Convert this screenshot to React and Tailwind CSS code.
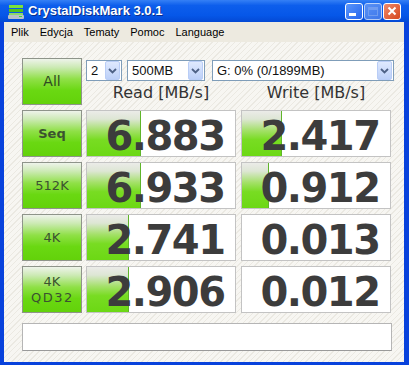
const rows = [
  { label: "Seq", bold: true, read: "6.883", readBar: 55, write: "2.417", writeBar: 41 },
  { label: "512K", read: "6.933", readBar: 55, write: "0.912", writeBar: 28 },
  { label: "4K", read: "2.741", readBar: 43, write: "0.013", writeBar: 0 },
  { label: "4K", sub: "QD32", read: "2.906", readBar: 43, write: "0.012", writeBar: 0 },
];

const greenBtn =
  "border border-[#8e948a] bg-[linear-gradient(to_bottom,#eef3ea_0%,#cdeab6_18%,#8fe046_45%,#6ad812_70%,#63d20a_100%)]";

function Arrow() {
  return (
    <div className="w-[15px] h-[19px] rounded-[2px] border border-[#b9cdf6] bg-[linear-gradient(to_bottom,#dfe9fe,#bcd0f8)] flex items-center justify-center">
      <svg width="9" height="6" viewBox="0 0 9 6">
        <path d="M1 1 L4.5 4.5 L8 1" fill="none" stroke="#4d6185" strokeWidth="1.8" />
      </svg>
    </div>
  );
}

function Select({ value, className }) {
  return (
    <div className={`h-[21px] bg-white border border-[#7f9db9] flex items-center justify-between pl-[4px] pr-[1px] ${className}`}>
      <span className="text-[13px] text-[#111] leading-none">{value}</span>
      <Arrow />
    </div>
  );
}

function Cell({ value, bar }) {
  return (
    <div className="relative w-[150px] h-[47px] bg-white border border-[#c3c3c3] overflow-hidden">
      {bar > 0 && (
        <div
          className="absolute left-0 top-0 bottom-0 border-r border-[#5fb52a] bg-[linear-gradient(to_bottom,#ebebe8_0%,#dde6d4_18%,#a2e066_44%,#78dc22_64%,#6cd814_100%)]"
          style={{ width: bar - 1 }}
        />
      )}
      <div className="relative h-full flex items-center justify-center pt-[4px] pl-[8px]">
        <span className="font-['DejaVu_Sans'] font-bold text-[40px] leading-none tracking-[-1.5px] text-[#3c3c3c]">
          {value}
        </span>
      </div>
    </div>
  );
}

function TitleButton({ children, className }) {
  return (
    <div className={`w-[18px] h-[17px] rounded-[3px] border border-white flex items-center justify-center ${className}`}>
      {children}
    </div>
  );
}

export default function App() {
  return (
    <div className="w-[409px] h-[365px] flex flex-col bg-[#0842dc] font-['Liberation_Sans',sans-serif]">
      {/* title bar */}
      <div className="h-[22px] flex items-center px-[8px] bg-[linear-gradient(to_bottom,#3580f5_0%,#0d5eec_25%,#0657e8_70%,#0449d4_100%)]">
        <svg width="16" height="15" viewBox="0 0 16 15" className="mr-[4px]">
          <rect x="1" y="1" width="14" height="3" fill="#7be23a" />
          <rect x="1" y="5" width="14" height="3" fill="#4fc21a" />
          <rect x="1" y="9" width="14" height="2" fill="#8dd86a" />
          <rect x="0" y="11" width="16" height="4" rx="1" fill="#b8c0c8" />
          <rect x="11" y="12" width="3" height="1" fill="#38e038" />
        </svg>
        <span className="text-white font-bold text-[13px] [text-shadow:1px_1px_0_#0a2f8c]">CrystalDiskMark 3.0.1</span>
        <div className="ml-auto flex gap-[1px]">
          <TitleButton className="bg-[linear-gradient(135deg,#5b96fb,#2565ee)]">
            <div className="w-[7px] h-[3px] bg-white mt-[7px] mr-[4px]" />
          </TitleButton>
          <TitleButton className="bg-[linear-gradient(135deg,#7aa6f8,#5687ee)] opacity-70 border-[#c8d8fa]">
            <div className="w-[10px] h-[9px] border border-[#9bb8f4] border-t-[3px]" />
          </TitleButton>
          <TitleButton className="bg-[linear-gradient(135deg,#ee8a6c,#d6461c)]">
            <svg width="10" height="10" viewBox="0 0 10 10">
              <path d="M1.5 1.5 L8.5 8.5 M8.5 1.5 L1.5 8.5" stroke="white" strokeWidth="2" />
            </svg>
          </TitleButton>
        </div>
      </div>

      <div className="flex-1 flex flex-col mx-[4px] mr-[5px] mb-[3px]">
        {/* menu bar */}
        <div className="h-[20px] bg-[#edeae0] flex items-center gap-[11px] pl-[7px] text-[11px] text-black">
          <span>Plik</span>
          <span>Edycja</span>
          <span>Tematy</span>
          <span>Pomoc</span>
          <span>Language</span>
        </div>

        {/* client */}
        <div className="flex-1 pl-[18px] pt-[16px] bg-[#f6f5f1] bg-[repeating-linear-gradient(135deg,#f7f6f2_0px,#f7f6f2_3px,#ebe9e2_3px,#ebe9e2_4px)]">
          <div className="flex">
            <div className={`w-[60px] h-[47px] flex items-center justify-center ${greenBtn}`}>
              <span className="font-['DejaVu_Sans'] text-[14px] text-[#2f4a22]">All</span>
            </div>
            <div className="ml-[4px] w-[308px] flex flex-col">
              <div className="flex mt-[2px]">
                <Select value="2" className="w-[36px]" />
                <Select value="500MB" className="w-[78px] ml-[5px]" />
                <Select value="G: 0% (0/1899MB)" className="w-[182px] ml-[7px]" />
              </div>
              <div className="flex h-[24px] items-center">
                <div className="w-[150px] text-center font-['DejaVu_Sans'] text-[16px] text-[#333]">Read [MB/s]</div>
                <div className="w-[150px] ml-[5px] text-center font-['DejaVu_Sans'] text-[16px] text-[#333]">Write [MB/s]</div>
              </div>
            </div>
          </div>

          {rows.map((r, i) => (
            <div key={i} className="flex mt-[5px]">
              <div className={`w-[60px] h-[47px] flex flex-col items-center justify-center ${greenBtn}`}>
                <span className={`font-['DejaVu_Sans'] text-[13px] leading-[16px] text-[#3b5230] ${r.bold ? "font-bold" : ""}`}>
                  {r.label}
                </span>
                {r.sub && (
                  <span className="font-['DejaVu_Sans'] text-[13px] leading-[16px] tracking-[1.5px] text-[#3b5230] pl-[1px]">{r.sub}</span>
                )}
              </div>
              <div className="ml-[4px]">
                <Cell value={r.read} bar={r.readBar} />
              </div>
              <div className="ml-[5px]">
                <Cell value={r.write} bar={r.writeBar} />
              </div>
            </div>
          ))}

          <div className="mt-[10px] w-[370px] h-[28px] bg-white border border-[#b5b5b5] border-b-[#9a9a9a]" />
        </div>
      </div>
    </div>
  );
}
